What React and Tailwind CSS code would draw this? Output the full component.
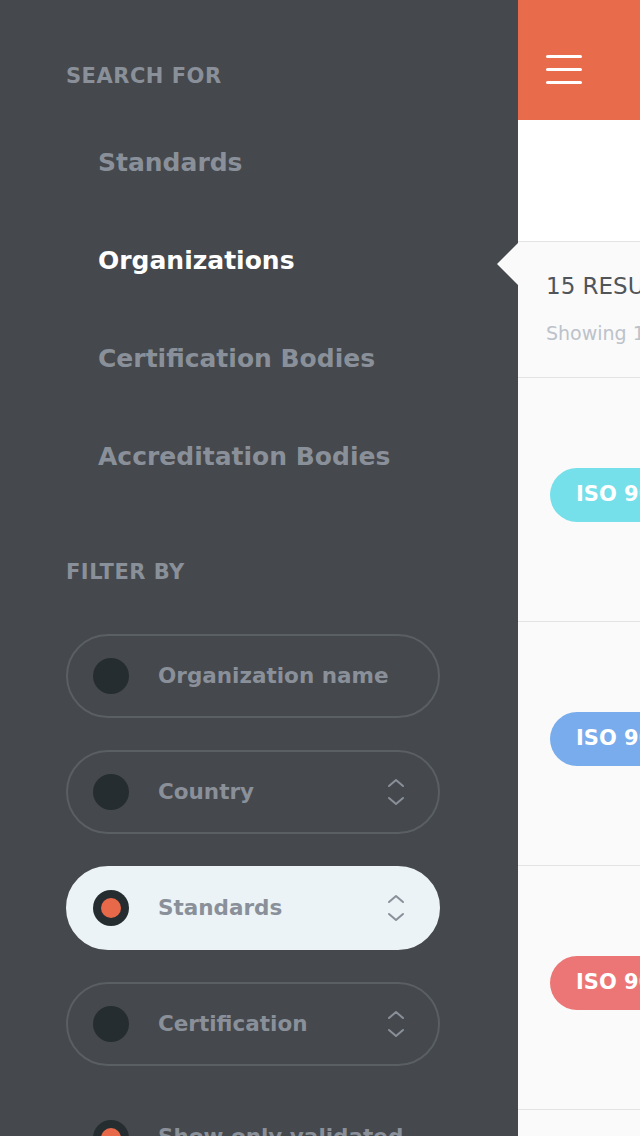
const font = { fontFamily: '"DejaVu Sans", "Liberation Sans", sans-serif' };

function Chevrons({ color = "#8a9099" }) {
  return (
    <svg width="20" height="30" viewBox="0 0 20 30" fill="none" stroke={color} strokeWidth="2" strokeLinecap="round" strokeLinejoin="round">
      <path d="M3 9 L10 3 L17 9" />
      <path d="M3 21 L10 27 L17 21" />
    </svg>
  );
}

function Dot({ on }) {
  return (
    <span className="w-9 h-9 rounded-full bg-[#262d30] flex items-center justify-center shrink-0">
      {on && <span className="w-5 h-5 rounded-full bg-[#e8694a]" />}
    </span>
  );
}

function FilterPill({ label, active, select }) {
  return (
    <div
      className={
        "h-[84px] rounded-full flex items-center pl-[25px] pr-[32px] border-2 " +
        (active ? "bg-[#ebf3f6] border-[#ebf3f6]" : "border-[#5a5f63]")
      }
    >
      <Dot on={active} />
      <span className="ml-[29px] text-[21.5px] font-bold text-[#8a9099] flex-1">{label}</span>
      {select && <Chevrons />}
    </div>
  );
}

const searchItems = ["Standards", "Organizations", "Certification Bodies", "Accreditation Bodies"];

const results = [
  { color: "bg-[#75dfea]" },
  { color: "bg-[#78acec]" },
  { color: "bg-[#ec7676]" },
];

export default function App() {
  return (
    <div className="h-[1136px] w-[640px] flex overflow-hidden" style={font}>
      <aside className="w-[518px] shrink-0 bg-[#45484c] pl-[66px] pt-[62px]">
        <h3 className="text-[21px] leading-[28px] font-bold text-[#8a9099] tracking-[0.5px]">SEARCH FOR</h3>
        <ul className="mt-[24px]">
          {searchItems.map((s) => (
            <li
              key={s}
              className={
                "h-[98px] flex items-center pl-[32px] text-[25px] font-bold " +
                (s === "Organizations" ? "text-white" : "text-[#8a9099]")
              }
            >
              {s}
            </li>
          ))}
        </ul>
        <h3 className="mt-[52px] text-[21px] leading-[28px] font-bold text-[#8a9099] tracking-[0.5px]">FILTER BY</h3>
        <div className="mt-[48px] w-[374px] flex flex-col gap-[32px]">
          <FilterPill label="Organization name" />
          <FilterPill label="Country" select />
          <FilterPill label="Standards" select active />
          <FilterPill label="Certification" select />
        </div>
        <div className="mt-[54px] flex items-start pl-[27px]">
          <Dot on />
          <span className="ml-[29px] mt-[1px] text-[21.5px] font-bold text-[#8a9099]">Show only validated</span>
        </div>
      </aside>

      <main className="relative flex-1 min-w-0 bg-[#fafafa]">
        <header className="h-[120px] bg-[#e86c4b] pl-[28px] pt-[55px]">
          <div className="flex flex-col gap-[10px]">
            <span className="block w-[36px] h-[3px] rounded bg-white" />
            <span className="block w-[36px] h-[3px] rounded bg-white" />
            <span className="block w-[36px] h-[3px] rounded bg-white" />
          </div>
        </header>
        <div className="h-[122px] bg-white border-b border-[#e3e3e3]" />
        <span className="absolute left-[-21px] top-[243px] w-0 h-0 border-y-[21px] border-y-transparent border-r-[21px] border-r-[#fafafa]" />
        <div className="h-[136px] border-b border-[#e3e3e3] pl-[28px] pt-[28px] whitespace-nowrap">
          <div className="text-[23px] leading-[32px] text-[#50555a]">15 RESULTS FOUND</div>
          <div className="mt-[18px] text-[19px] leading-[26px] text-[#bcc2ca]">Showing 1–15 of 15</div>
        </div>
        {results.map((r, i) => (
          <div key={i} className="h-[244px] border-b border-[#e3e3e3] flex items-center pl-[32px] pb-[10px]">
            <span className={"h-[54px] rounded-full flex items-center pl-[26px] pr-[26px] whitespace-nowrap text-[21px] font-bold text-white " + r.color}>
              ISO 9001:2015
            </span>
          </div>
        ))}
      </main>
    </div>
  );
}
